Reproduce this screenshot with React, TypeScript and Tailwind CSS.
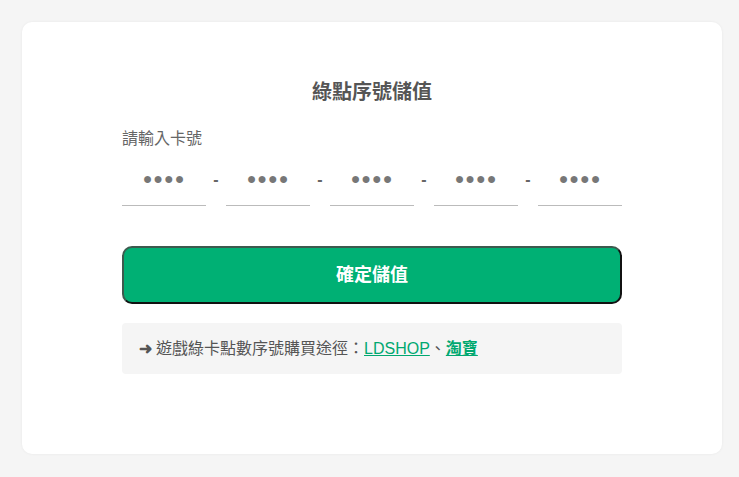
import { useState } from 'react';

const FONT = '"Liberation Sans", "Noto Sans CJK TC", sans-serif';

export default function App() {
  const [parts, setParts] = useState<string[]>(['', '', '', '', '']);

  return (
    <div className="min-h-screen bg-[#f5f5f5] pl-[22px] pt-[22px]" style={{ fontFamily: FONT }}>
      <div className="w-[700px] h-[432px] bg-white rounded-[10px] shadow-[0_0_3px_rgba(0,0,0,0.06)] pt-[55px]">
        <div className="w-[500px] mx-auto">
          <h1 className="text-center text-[20px] leading-[30px] font-bold text-[#555]">綠點序號儲值</h1>

          <div className="mt-[20px] text-[16px] leading-[24px] text-[#666]">請輸入卡號</div>

          <div className="mt-[15px] flex items-center">
            {parts.map((v, i) => (
              <div key={i} className="flex items-center">
                {i > 0 && <span className="w-[20px] mb-[12px] text-center text-[16px] font-bold text-[#666]">-</span>}
                <input
                  value={v}
                  maxLength={4}
                  placeholder="●●●●"
                  onChange={(e) => {
                    const next = [...parts];
                    next[i] = e.target.value;
                    setParts(next);
                  }}
                  className="w-[84px] h-[40px] pb-[14px] border-b border-[#bbb] text-center text-[16px] tracking-[1px] text-[#555] outline-none placeholder:text-[#777]"
                  style={{ fontFamily: FONT }}
                />
              </div>
            ))}
          </div>

          <button className="mt-[40px] w-full h-[58px] rounded-[10px] bg-[#00b074] border-2 border-t-[#3d5a4e] border-l-[#3d5a4e] border-r-[#111] border-b-[#111] text-white text-[18px] font-bold">
            確定儲值
          </button>

          <div className="mt-[19px] h-[51px] bg-[#f5f5f5] rounded-[4px] px-[17px] flex items-center text-[16px] text-[#555]">
            <span className="font-bold mr-[4px]">➜</span>
            <span>遊戲綠卡點數序號購買途徑：</span>
            <a className="text-[#00a870] underline">LDSHOP</a>
            <span>、</span>
            <a className="text-[#00a870] underline font-bold">淘寶</a>
          </div>
        </div>
      </div>
    </div>
  );
}
